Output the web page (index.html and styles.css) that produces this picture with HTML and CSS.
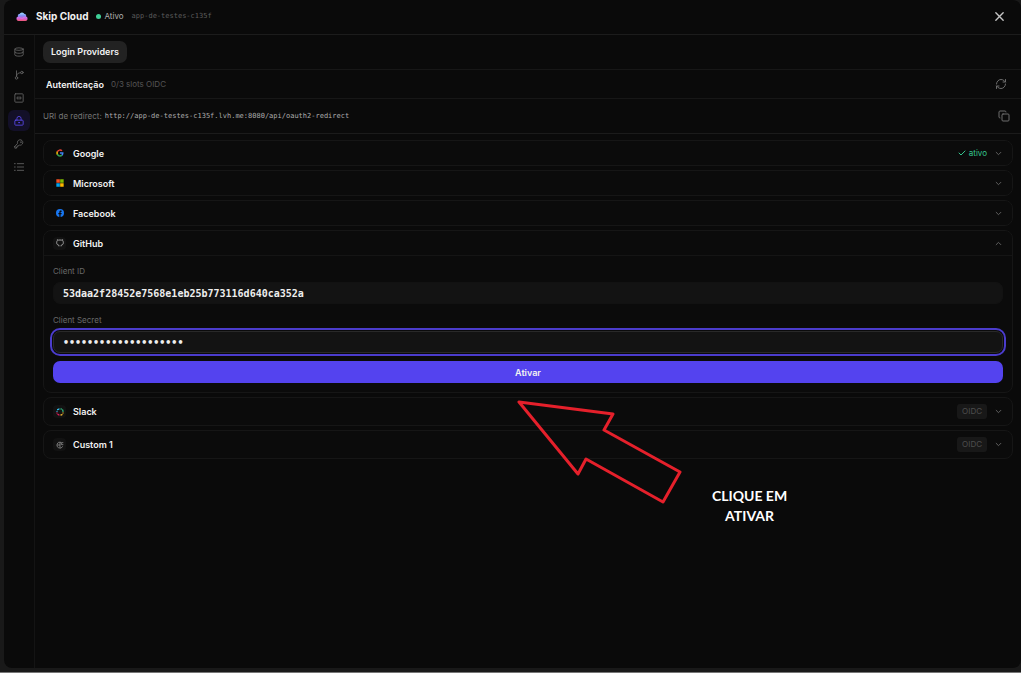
FILE: index.html
```html
<!DOCTYPE html>
<html lang="pt-BR">
<head>
<meta charset="utf-8">
<meta name="viewport" content="width=device-width, initial-scale=1">
<title>Skip Cloud</title>
<link rel="stylesheet" href="styles.css">
</head>
<body>
<div class="frame">
  <div class="panel">
    <header class="topbar">
      <svg class="logo" viewBox="0 0 24 20" aria-hidden="true">
        <defs>
          <linearGradient id="cloud" x1="0" y1="0" x2="0" y2="1">
            <stop offset="0" stop-color="#9fe4ff"/><stop offset=".4" stop-color="#7f8cf5"/><stop offset=".7" stop-color="#cf62d8"/><stop offset="1" stop-color="#f0566f"/>
          </linearGradient>
        </defs>
        <path fill="url(#cloud)" d="M5 20a4.500 4.500 0 0 1-1-8.800 4 4 0 0 1 3-5.200 5.500 5.500 0 0 1 10 0 4 4 0 0 1 3 5.200A4.500 4.500 0 0 1 19 20z"/>
        <path fill="none" stroke="#e77bd8" stroke-width="1.500" d="M2 15c5-5 8 2 12-1s5-2 8-1"/>
      </svg>
      <h1 class="brand">Skip Cloud</h1>
      <span class="status"><i class="dot"></i>Ativo</span>
      <span class="app-name">app-de-testes-c135f</span>
      <button class="icon-button push close" aria-label="Fechar"><svg class="icon" viewBox="0 0 24 24"><path d="M4 4l16 16M20 4L4 20"/></svg></button>
    </header>
    <div class="body">
      <nav class="sidebar" aria-label="Seções">
        <button class="nav-item" aria-label="Banco de dados"><svg class="icon" viewBox="0 0 24 24"><ellipse cx="12" cy="5" rx="10" ry="3"/><path d="M2 5v14c0 1.700 4 3 10 3s10-1.300 10-3V5M2 12c0 1.700 4 3 10 3s10-1.300 10-3"/></svg></button>
        <button class="nav-item" aria-label="Branches"><svg class="icon" viewBox="0 0 24 24"><path d="M6 2v13"/><circle cx="19" cy="6" r="3"/><circle cx="6" cy="19" r="3"/><path d="M16 6.500c-6 0-10 3-10 8.500"/></svg></button>
        <button class="nav-item" aria-label="Funções"><svg class="icon" viewBox="0 0 24 24"><rect x="2" y="2" width="20" height="20" rx="2"/><path d="M9.500 9v6M6.500 12h3M14.500 9v6M14.500 12h3"/></svg></button>
        <button class="nav-item active" aria-label="Autenticação"><svg class="icon" viewBox="0 0 24 24"><rect x="2" y="10" width="20" height="12" rx="2"/><path d="M7 10V6a5 5 0 0 1 10 0v4"/><circle cx="12" cy="16" r="1"/></svg></button>
        <button class="nav-item" aria-label="Chaves"><svg class="icon" viewBox="0 0 24 24"><path d="M2 18v4h4v-3h3v-3h2l1.500-1.500a6.500 6.500 0 1 0-4-4L2 18z"/><circle cx="16.500" cy="7.500" r=".6"/></svg></button>
        <button class="nav-item" aria-label="Logs"><svg class="icon" viewBox="0 0 24 24"><path d="M8 4h15M8 12h15M8 20h15M1 4h2M1 12h2M1 20h2"/></svg></button>
      </nav>
      <main class="content">
        <div class="tabs"><button class="tab">Login Providers</button></div>
        <div class="section-head">
          <h2 class="section-title">Autenticação</h2>
          <span class="slots">0/3 slots OIDC</span>
          <button class="icon-button push refresh" aria-label="Atualizar"><svg class="icon" viewBox="0 0 24 24"><path d="M3 12a9 9 0 0 1 9-9 9.700 9.700 0 0 1 6.700 2.700L21 8M21 3v5h-5M21 12a9 9 0 0 1-9 9 9.700 9.700 0 0 1-6.700-2.700L3 16M8 16H3v5"/></svg></button>
        </div>
        <div class="redirect">
          <span class="redirect-label">URI de redirect:</span>
          <code class="redirect-uri">http://app-de-testes-c135f.lvh.me:8080/api/oauth2-redirect</code>
          <button class="icon-button push copy" aria-label="Copiar"><svg class="icon" viewBox="0 0 24 24"><rect x="8" y="8" width="14" height="14" rx="2"/><path d="M4 16a2 2 0 0 1-2-2V4c0-1.100.9-2 2-2h10a2 2 0 0 1 2 2"/></svg></button>
        </div>
        <div class="providers">
          <section class="card">
            <button class="card-head">
              <span class="mark"><svg viewBox="0 0 24 24"><path fill="#4285f4" d="M22.600 12.200c0-.8-.1-1.500-.2-2.200H12v4.300h5.900a5 5 0 0 1-2.200 3.300v2.800h3.600c2.100-2 3.300-4.800 3.300-8.200z"/><path fill="#34a853" d="M12 23c3 0 5.500-1 7.300-2.700l-3.600-2.800c-1 .7-2.200 1.100-3.700 1.100-2.900 0-5.300-1.900-6.200-4.500H2.200v2.800A11 11 0 0 0 12 23z"/><path fill="#fbbc05" d="M5.800 14.100a6.600 6.600 0 0 1 0-4.200V7.100H2.200a11 11 0 0 0 0 9.900z"/><path fill="#ea4335" d="M12 5.400c1.600 0 3.100.6 4.200 1.600l3.200-3.100A11 11 0 0 0 2.200 7.100l3.600 2.800C6.700 7.300 9.100 5.400 12 5.400z"/></svg></span>
              <span class="name">Google</span>
              <span class="enabled push"><svg class="icon" viewBox="0 0 24 24"><path d="M21 6L9 18l-6-6"/></svg>ativo</span>
              <svg class="icon chevron" viewBox="0 0 24 24"><path d="M4 8l8 8 8-8"/></svg>
            </button>
          </section>
          <section class="card">
            <button class="card-head">
              <span class="mark"><svg viewBox="0 0 24 24"><path fill="#f25022" d="M1 1h10.500v10.500H1z"/><path fill="#7fba00" d="M12.500 1H23v10.500H12.500z"/><path fill="#00a4ef" d="M1 12.500h10.500V23H1z"/><path fill="#ffb900" d="M12.500 12.500H23V23H12.500z"/></svg></span>
              <span class="name">Microsoft</span>
              <svg class="icon chevron push" viewBox="0 0 24 24"><path d="M4 8l8 8 8-8"/></svg>
            </button>
          </section>
          <section class="card">
            <button class="card-head">
              <span class="mark"><svg viewBox="0 0 24 24"><circle cx="12" cy="12" r="12" fill="#1877f2"/><path fill="#0b0b0b" d="M10 24v-8.500H7V12h3V9.400c0-3 1.800-4.700 4.500-4.700l2.700.2v3h-1.500c-1.500 0-2 .9-2 1.900V12H17l-.5 3.500h-2.800V24z"/></svg></span>
              <span class="name">Facebook</span>
              <svg class="icon chevron push" viewBox="0 0 24 24"><path d="M4 8l8 8 8-8"/></svg>
            </button>
          </section>
          <section class="card">
            <button class="card-head" aria-expanded="true">
              <span class="mark shaded"><svg viewBox="0 0 24 24"><path fill="none" stroke="#a0a0a0" stroke-width="3" d="M9 22v-3C5 18 2 16 2 11c0-3 1-5 2-6V2l4 1.500a14 14 0 0 1 8 0L20 2v3c1 1 2 3 2 6 0 5-3 7-7 8v3"/></svg></span>
              <span class="name">GitHub</span>
              <svg class="icon chevron push" viewBox="0 0 24 24"><path d="M4 16l8-8 8 8"/></svg>
            </button>
            <form class="card-form">
              <label class="field-label" for="client-id">Client ID</label>
              <input class="field" id="client-id" type="text" value="53daa2f28452e7568e1eb25b773116d640ca352a">
              <label class="field-label" for="client-secret">Client Secret</label>
              <input class="field focused" id="client-secret" type="password" value="abcdefghijklmnopqrst">
              <button class="activate" type="button">Ativar</button>
            </form>
          </section>
          <section class="card roomy">
            <button class="card-head">
              <span class="mark shaded"><svg viewBox="0 0 24 24" fill="none" stroke-width="4" stroke-linecap="round"><path stroke="#36c5f0" d="M3 10v0M5 5l4-2"/><path stroke="#2eb67d" d="M15 3h1M20 6l1 4"/><path stroke="#ecb22e" d="M21 15v0M18 20l-3 1"/><path stroke="#e01e5a" d="M9 21l-3-2M3 15v0"/></svg></span>
              <span class="name">Slack</span>
              <span class="badge push">OIDC</span>
              <svg class="icon chevron" viewBox="0 0 24 24"><path d="M4 8l8 8 8-8"/></svg>
            </button>
          </section>
          <section class="card roomy">
            <button class="card-head">
              <span class="mark shaded"><svg viewBox="0 0 24 24" fill="none" stroke="#8a8a8a" stroke-width="2.500"><path d="M20 16a9 9 0 1 1-5-12M4 12h8M12 4v16M16 11V5h6M16 11h6"/></svg></span>
              <span class="name">Custom 1</span>
              <span class="badge push">OIDC</span>
              <svg class="icon chevron" viewBox="0 0 24 24"><path d="M4 8l8 8 8-8"/></svg>
            </button>
          </section>
        </div>
      </main>
    </div>
  </div>
  <div class="callout">
    <svg class="arrow" viewBox="0 0 166 106" aria-hidden="true"><path d="M3 3L97 15 88 31 164 73 147 103 70 60 62 75z"/></svg>
    <p class="callout-text">CLIQUE EM<br>ATIVAR</p>
  </div>
</div>
</body>
</html>
```
FILE: styles.css
```css
* { box-sizing: border-box; }
body {
  margin: 0;
  background: #fff;
  color: #f2f2f2;
  font-family: Inter, "Liberation Sans", sans-serif;
  font-size: 9px;
}
button { font: inherit; color: inherit; background: none; border: 0; padding: 0; }
h1, h2, p { margin: 0; }
.frame {
  position: relative;
  display: flex;
  min-height: calc(100vh - 4px);
  margin-right: 3px;
  padding: 0 0 4px 4px;
  background: #191919;
  border-bottom: 1px solid #777;
}
.panel {
  flex: 1;
  display: flex;
  flex-direction: column;
  background: #0a0a0a;
  border-radius: 8px;
  overflow: hidden;
}
.icon {
  display: block;
  width: 12px;
  height: 12px;
  fill: none;
  stroke: currentColor;
  stroke-width: 2;
  stroke-linecap: round;
  stroke-linejoin: round;
}
.push { margin-left: auto; }
.topbar {
  display: flex;
  align-items: center;
  height: 35px;
  padding: 0 16px 2px 12px;
  border-bottom: 1px solid #1c1c1c;
}
.logo { width: 12px; height: 10px; margin-right: 8px; }
.brand { font-size: 10px; font-weight: 700; margin-right: 7px; }
.status {
  display: flex;
  align-items: center;
  gap: 4px;
  margin-right: 8px;
  color: #b0b0b0;
  font-size: 8px;
}
.dot { width: 5px; height: 5px; border-radius: 50%; background: #3fcf97; }
.app-name { font: 7px "DejaVu Sans Mono", monospace; color: #5c5c5c; }
.close { color: #c4c4c4; }
.close .icon { width: 11px; height: 11px; stroke-width: 3; }
.body { flex: 1; display: flex; }
.sidebar {
  width: 31px;
  padding: 6px 0 0 4px;
  display: flex;
  flex-direction: column;
  gap: 2px;
  border-right: 1px solid #141414;
}
.nav-item {
  display: grid;
  place-items: center;
  width: 22px;
  height: 21px;
  border-radius: 6px;
  color: #666;
}
.nav-item .icon { width: 10px; height: 10px; }
.nav-item.active { background: #131028; color: #5b4bf0; }
.content { flex: 1; min-width: 0; }
.tabs { height: 35px; padding: 6px 8px; border-bottom: 1px solid #171717; }
.tab {
  display: block;
  height: 22px;
  padding: 0 8px 2px;
  border-radius: 7px;
  background: #222;
  font-weight: 600;
}
.section-head {
  display: flex;
  align-items: center;
  gap: 7px;
  height: 29px;
  padding: 0 14px 0 11px;
  border-bottom: 1px solid #171717;
}
.section-title { font-size: 9px; font-weight: 600; }
.slots { font-size: 8px; color: #555; }
.refresh, .copy { color: #6c6c6c; }
.redirect {
  display: flex;
  align-items: center;
  gap: 3px;
  height: 35px;
  padding: 0 11px 0 8px;
  border-bottom: 1px solid #1b1b1b;
}
.redirect-label { font-size: 8px; color: #747474; }
.redirect-uri { font: 7px "DejaVu Sans Mono", monospace; color: #acacac; }
.providers {
  display: flex;
  flex-direction: column;
  gap: 4px;
  padding: 6px 8px;
}
.card { border: 1px solid #161616; border-radius: 8px; background: #0b0b0b; }
.card-head {
  display: flex;
  align-items: center;
  width: 100%;
  height: 24px;
  padding: 0 10px 0 9px;
  font-weight: 600;
}
.roomy .card-head { height: 27px; }
.mark {
  display: grid;
  place-items: center;
  width: 13px;
  height: 13px;
  margin-right: 7px;
  border-radius: 4px;
}
.mark svg { width: 8px; height: 8px; }
.shaded { background: #121212; }
.chevron { flex: none; width: 7px; height: 7px; color: #6a6a6a; stroke-width: 3; }
.enabled {
  display: flex;
  align-items: center;
  gap: 3px;
  margin-right: 8px;
  color: #35c58e;
  font-size: 8px;
  font-weight: 400;
}
.enabled .icon { width: 8px; height: 8px; stroke-width: 3; }
.badge {
  margin-right: 8px;
  padding: 0 5px;
  border-radius: 3px;
  background: #181818;
  color: #4e4e4e;
  font-size: 8px;
  font-weight: 400;
  line-height: 15px;
}
.card-form {
  display: flex;
  flex-direction: column;
  padding: 10px 9px 9px;
  border-top: 1px solid #151515;
}
.field-label {
  margin-bottom: 5px;
  color: #6a6a6a;
  font-size: 8px;
  line-height: 11px;
}
.field {
  height: 22px;
  margin-bottom: 11px;
  padding: 0 9px;
  border: 1px solid #121212;
  border-radius: 7px;
  background: #131313;
  color: #eee;
  font: bold 10px "DejaVu Sans Mono", monospace;
}
.focused {
  margin-bottom: 8px;
  border-color: #292929;
  outline: 2px solid #4b3ccc;
  outline-offset: 1px;
}
.activate {
  height: 22px;
  border-radius: 7px;
  background: #5443ef;
  font-weight: 600;
}
.callout {
  position: absolute;
  top: 399px;
  left: 516px;
  display: flex;
  gap: 30px;
  pointer-events: none;
}
.arrow {
  width: 166px;
  height: 106px;
  fill: none;
  stroke: #e5202b;
  stroke-width: 3;
  stroke-linejoin: round;
}
.callout-text {
  padding-top: 87px;
  color: #fff;
  font: 700 14px/20px Lato, sans-serif;
  text-align: center;
}
```
